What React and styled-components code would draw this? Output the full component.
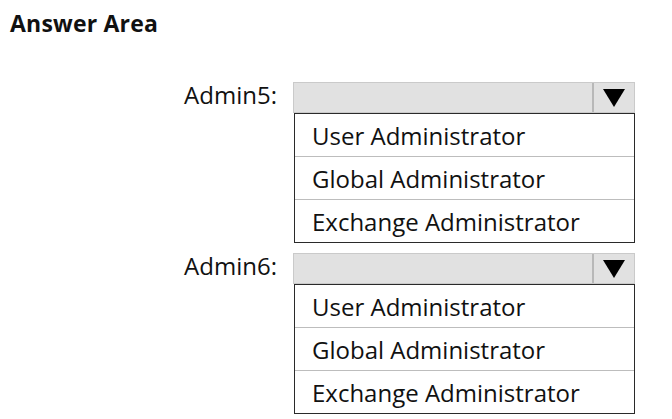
import React from 'react';
import styled, { createGlobalStyle } from 'styled-components';

const GlobalStyle = createGlobalStyle`
  body {
    margin: 0;
    background: #ffffff;
    font-family: "Open Sans", "Noto Sans", sans-serif;
    color: #111111;
  }
`;

const OPTIONS = ['User Administrator', 'Global Administrator', 'Exchange Administrator'];

const FIELDS = ['Admin5:', 'Admin6:'];

const App = () => {
  return (
    <Container>
      <GlobalStyle />
      <Heading>Answer Area</Heading>
      <Form>
        {FIELDS.map(label => (
          <Field key={label}>
            <Label>{label}</Label>
            <Control>
              <Select>
                <SelectValue />
                <ArrowBox>
                  <svg width="22" height="18" viewBox="0 0 22 18">
                    <path d="M0 0 H22 L11 18 Z" fill="#000" />
                  </svg>
                </ArrowBox>
              </Select>
              <OptionList>
                {OPTIONS.map(option => (
                  <OptionRow key={option}>{option}</OptionRow>
                ))}
              </OptionList>
            </Control>
          </Field>
        ))}
      </Form>
    </Container>
  );
};

export default App;

const Container = styled.div`
  width: 672px;
  height: 419px;
  padding: 8px 0 0 10px;
  box-sizing: border-box;
`;

const Heading = styled.h1`
  margin: 0;
  font-size: 23px;
  font-weight: 700;
  line-height: 30px;
  letter-spacing: 0.2px;
`;

const Form = styled.div`
  display: flex;
  flex-direction: column;
  gap: 10px;
  margin-top: 44px;
`;

const Field = styled.div`
  display: flex;
  align-items: flex-start;
`;

const Label = styled.div`
  width: 283px;
  text-align: right;
  font-size: 24px;
  line-height: 31px;
  padding-right: 16px;
  box-sizing: border-box;
  margin-top: -3px;
`;

const Control = styled.div`
  width: 342px;
  display: flex;
  flex-direction: column;
`;

const Select = styled.div`
  height: 31px;
  display: flex;
  background: #e1e1e1;
  border: 1px solid #cacaca;
  box-sizing: border-box;
`;

const SelectValue = styled.div`
  flex: 1;
`;

const ArrowBox = styled.div`
  width: 40px;
  border-left: 2px solid #b8b8b8;
  display: flex;
  align-items: center;
  justify-content: center;
`;

const OptionList = styled.div`
  margin-left: 1px;
  border: 1px solid #2a2a2a;
  background: #ffffff;
`;

const OptionRow = styled.div`
  height: 42px;
  padding: 2px 0 0 17px;
  box-sizing: border-box;
  font-size: 24px;
  line-height: 40px;
  white-space: nowrap;

  & + & {
    height: 43px;
    border-top: 1px solid #bdbdbd;
  }
`;
